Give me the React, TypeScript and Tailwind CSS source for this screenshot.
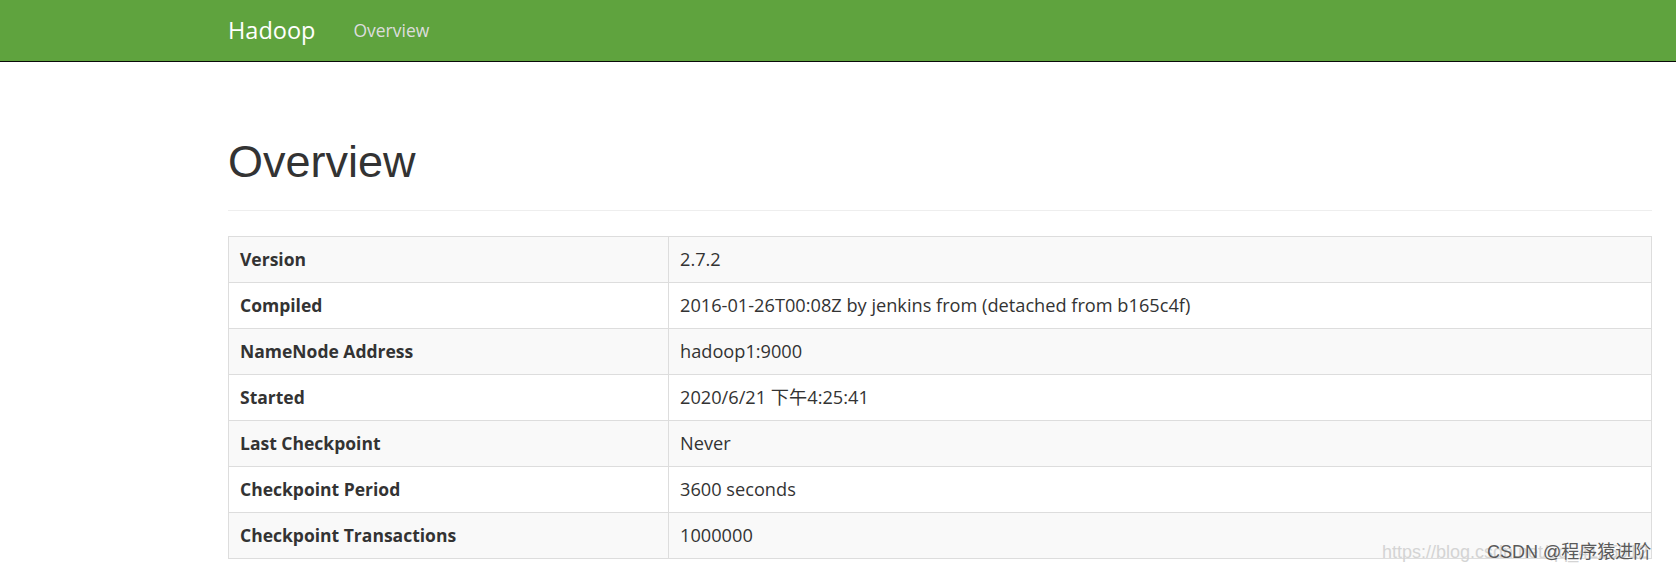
const rows: [string, string][] = [
  ["Version", "2.7.2"],
  ["Compiled", "2016-01-26T00:08Z by jenkins from (detached from b165c4f)"],
  ["NameNode Address", "hadoop1:9000"],
  ["Started", "2020/6/21 下午4:25:41"],
  ["Last Checkpoint", "Never"],
  ["Checkpoint Period", "3600 seconds"],
  ["Checkpoint Transactions", "1000000"],
];

const sans = "font-['Open_Sans','Noto_Sans_CJK_SC',sans-serif]";

export default function App() {
  return (
    <div className={`relative min-h-[572px] overflow-hidden bg-white text-[#333] ${sans}`}>
      {/* Navbar */}
      <nav className="h-[62px] bg-[#5fa33e] border-b border-[#0a0a0a]">
        <div className="flex items-center h-full pl-[228px]">
          <span className="text-[23.5px] text-white leading-none">Hadoop</span>
          <span className="ml-[38px] text-[17.5px] text-[#dddddd] leading-none">Overview</span>
        </div>
      </nav>

      <div className="pl-[228px] pr-[24px]">
        {/* Page header */}
        <div className="mt-[75px] mb-[25px] pb-[11px] border-b border-[#eeeeee]">
          <h1 className="font-['Liberation_Sans',Arial,sans-serif] text-[45px] leading-[49.5px] font-normal mb-[12px] text-[#333]">
            Overview
          </h1>
        </div>

        {/* Info table */}
        <table className="w-[1424px] border-collapse border border-[#dddddd] leading-[25px]">
          <tbody>
            {rows.map(([k, v], i) => (
              <tr key={k} className={i % 2 === 0 ? "bg-[#f9f9f9]" : "bg-white"}>
                <th className="w-[440px] px-[11px] py-[10px] border border-[#dddddd] text-left font-bold text-[17.5px]">
                  {k}
                </th>
                <td className="px-[11px] py-[10px] border border-[#dddddd] text-[18.2px]">{v}</td>
              </tr>
            ))}
          </tbody>
        </table>
      </div>

      {/* Watermark */}
      <div className="absolute left-[1382px] top-[541px] font-['Liberation_Sans','Noto_Sans_CJK_SC',sans-serif] text-[18px] leading-[22px] whitespace-nowrap">
        <span className="text-[#d4d4d4]">https://blog.csdn.net/qq_4125912</span>
        <span className="absolute left-[105px] top-0 text-[#5a5a5a]">CSDN @程序猿进阶</span>
      </div>
    </div>
  );
}
